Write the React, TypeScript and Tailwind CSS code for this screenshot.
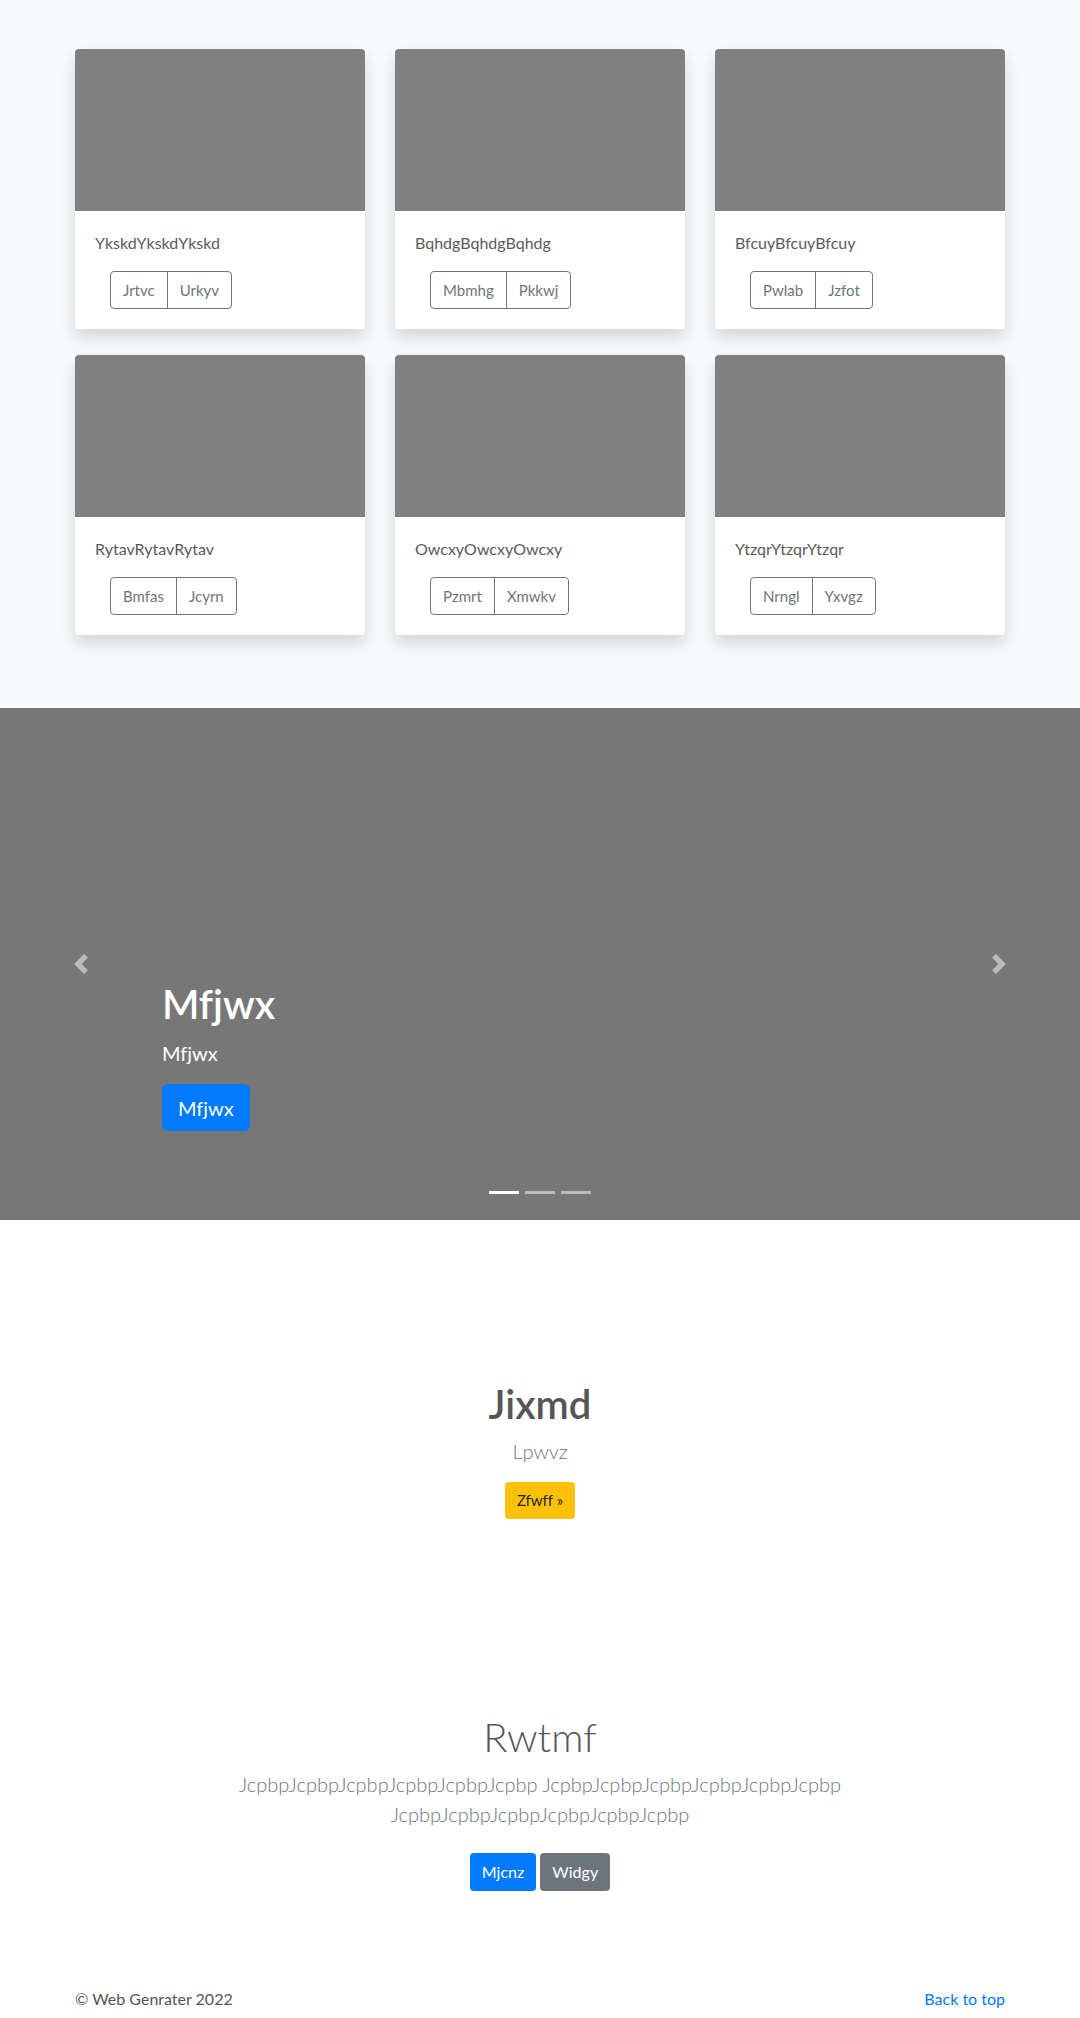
import React from "react";

type Card = { title: string; a: string; b: string };

const cards: Card[] = [
  { title: "YkskdYkskdYkskd", a: "Jrtvc", b: "Urkyv" },
  { title: "BqhdgBqhdgBqhdg", a: "Mbmhg", b: "Pkkwj" },
  { title: "BfcuyBfcuyBfcuy", a: "Pwlab", b: "Jzfot" },
  { title: "RytavRytavRytav", a: "Bmfas", b: "Jcyrn" },
  { title: "OwcxyOwcxyOwcxy", a: "Pzmrt", b: "Xmwkv" },
  { title: "YtzqrYtzqrYtzqr", a: "Nrngl", b: "Yxvgz" },
];

function AlbumCard({ card }: { card: Card }) {
  return (
    <div className="bg-white rounded overflow-hidden shadow-[0_8px_16px_rgba(0,0,0,0.15)]">
      <div className="h-[162px] bg-[#808080]" />
      <div className="p-5">
        <p className="text-[16px] leading-6 mb-4 text-[#5a5a5a]">{card.title}</p>
        <div className="ml-[15px] inline-flex h-[38px] border border-[#6c757d] rounded text-[#6c757d] text-[15px]">
          <button className="px-3">{card.a}</button>
          <button className="px-3 border-l border-[#6c757d]">{card.b}</button>
        </div>
      </div>
    </div>
  );
}

function Chevron({ dir }: { dir: "prev" | "next" }) {
  return (
    <svg width="20" height="20" viewBox="0 0 8 8" className="opacity-50" fill="#fff">
      {dir === "prev" ? (
        <path d="M5.25 0l-4 4 4 4 1.5-1.5-2.5-2.5 2.5-2.5-1.5-1.5z" />
      ) : (
        <path d="M2.75 0l-1.5 1.5 2.5 2.5-2.5 2.5 1.5 1.5 4-4-4-4z" />
      )}
    </svg>
  );
}

export default function App() {
  return (
    <div className="font-['Lato','Open_Sans',sans-serif] [font-variant-ligatures:none] text-[#555] bg-white">
      {/* cards */}
      <section className="bg-[#f8f9fa] pt-[49px] pb-[73px]">
        <div className="w-[960px] mx-auto px-[15px]">
          <div className="grid grid-cols-3 gap-x-[30px] gap-y-[26px]">
            {cards.map((c) => (
              <AlbumCard key={c.title} card={c} />
            ))}
          </div>
        </div>
      </section>

      {/* carousel */}
      <section className="relative h-[512px] bg-[#777]">
        <div className="h-full flex flex-col justify-end px-[15%] pb-[89px] text-white">
          <h1 className="text-[40px] leading-[48px] font-semibold mb-[10px]">Mfjwx</h1>
          <p className="text-[20px] leading-[30px] mb-4">Mfjwx</p>
          <div>
            <a className="inline-flex items-center h-[47px] px-4 rounded-md bg-[#007bff] text-[20px] text-white">
              Mfjwx
            </a>
          </div>
        </div>
        <div className="absolute left-0 top-0 bottom-0 w-[15%] flex items-center justify-center">
          <Chevron dir="prev" />
        </div>
        <div className="absolute right-0 top-0 bottom-0 w-[15%] flex items-center justify-center">
          <Chevron dir="next" />
        </div>
        <div className="absolute left-0 right-0 bottom-0 mb-4 flex justify-center">
          <span className="w-[30px] h-[3px] mx-[3px] my-[10px] bg-white" />
          <span className="w-[30px] h-[3px] mx-[3px] my-[10px] bg-white opacity-50" />
          <span className="w-[30px] h-[3px] mx-[3px] my-[10px] bg-white opacity-50" />
        </div>
      </section>

      {/* feature */}
      <section className="pt-[160px] pb-[146px] text-center">
        <h2 className="text-[40px] leading-[48px] font-semibold mb-2 text-[#555]">Jixmd</h2>
        <p className="text-[20px] leading-[30px] font-light text-[#6c757d]">Lpwvz</p>
        <div className="mt-4">
          <a className="inline-flex items-center h-[37px] px-3 rounded bg-[#ffc107] text-[#212529] text-[15px]">
            Zfwff »
          </a>
        </div>
      </section>

      {/* jumbotron */}
      <section className="pt-12 pb-10 text-center">
        <h1 className="text-[40px] leading-[48px] font-light mb-2 text-[#555]">Rwtmf</h1>
        <p className="w-[620px] mx-auto text-[20px] leading-[30px] font-light text-[#6c757d] mb-6">
          JcpbpJcpbpJcpbpJcpbpJcpbpJcpbp JcpbpJcpbpJcpbpJcpbpJcpbpJcpbp
          <br />
          JcpbpJcpbpJcpbpJcpbpJcpbpJcpbp
        </p>
        <div className="flex justify-center gap-1 my-2">
          <a className="inline-flex items-center h-[38px] px-3 rounded bg-[#007bff] text-white text-[16px]">
            Mjcnz
          </a>
          <a className="inline-flex items-center h-[38px] px-3 rounded bg-[#6c757d] text-white text-[16px]">
            Widgy
          </a>
        </div>
      </section>

      {/* footer */}
      <footer className="py-12">
        <div className="w-[960px] mx-auto px-[15px] flex justify-between text-[16px] leading-6">
          <p className="text-[#555]">© Web Genrater 2022</p>
          <a className="text-[#007bff]">Back to top</a>
        </div>
      </footer>
    </div>
  );
}
